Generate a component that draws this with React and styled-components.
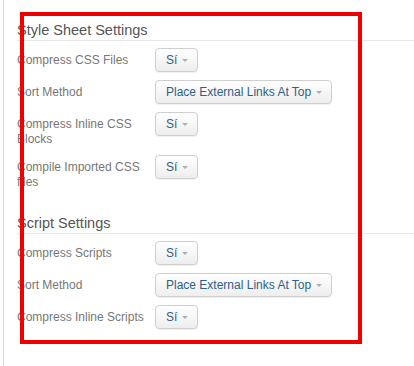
import styled, { createGlobalStyle } from "styled-components";

const GlobalStyle = createGlobalStyle`
  html, body {
    margin: 0;
    padding: 0;
    background: #fff;
  }
  body {
    font-family: "Liberation Sans", Arial, Helvetica, sans-serif;
  }
`;

const sections = [
  {
    title: "Style Sheet Settings",
    rows: [
      { label: "Compress CSS Files", value: "Sí" },
      { label: "Sort Method", value: "Place External Links At Top" },
      { label: "Compress Inline CSS Blocks", value: "Sí" },
      { label: "Compile Imported CSS files", value: "Sí" },
    ],
  },
  {
    title: "Script Settings",
    rows: [
      { label: "Compress Scripts", value: "Sí" },
      { label: "Sort Method", value: "Place External Links At Top" },
      { label: "Compress Inline Scripts", value: "Sí" },
    ],
  },
];

function App() {
  return (
    <>
      <GlobalStyle />
      <Page>
        {sections.map((section) => (
          <Fieldset key={section.title}>
            <Legend>{section.title}</Legend>
            {section.rows.map((row, i) => (
              <Row key={i}>
                <Label>{row.label}</Label>
                <Select>
                  <span>{row.value}</span>
                  <Caret />
                </Select>
              </Row>
            ))}
          </Fieldset>
        ))}
        <Highlight />
      </Page>
    </>
  );
}

const Page = styled.div`
  position: relative;
  box-sizing: border-box;
  min-height: 366px;
  margin-left: 3px;
  border-left: 1px solid #d8d8d8;
  padding: 20px 0 0 13px;
  overflow: hidden;
`;

const Fieldset = styled.section`
  display: flow-root;
  margin-bottom: 15px;
`;

const Legend = styled.h3`
  margin: 0 0 7px;
  font-size: 14.5px;
  font-weight: normal;
  line-height: 20px;
  color: #555;
  border-bottom: 1px solid #e8e8e8;
`;

const Row = styled.div`
  display: flex;
  align-items: flex-start;
  margin-bottom: 8px;
`;

const Label = styled.div`
  width: 130px;
  flex-shrink: 0;
  margin-right: 8px;
  padding-top: 5px;
  font-size: 12px;
  line-height: 15px;
  color: #777;
`;

const Select = styled.div`
  display: inline-flex;
  align-items: center;
  box-sizing: border-box;
  height: 24px;
  padding: 0 9px 0 10px;
  border: 1px solid #cfcfcf;
  border-radius: 4px;
  background: linear-gradient(#ffffff, #eeeeee);
  box-shadow: 0 1px 1px rgba(0, 0, 0, 0.06);
  font-size: 12px;
  color: #2f5f8a;
  white-space: nowrap;
`;

const Caret = styled.i`
  display: inline-block;
  margin-left: 5px;
  width: 0;
  height: 0;
  border-left: 3px solid transparent;
  border-right: 3px solid transparent;
  border-top: 3px solid #b0b0b0;
`;

const Highlight = styled.div`
  position: absolute;
  left: 16px;
  top: 12px;
  width: 342px;
  height: 332px;
  box-sizing: border-box;
  border: 4px solid #ec0000;
  pointer-events: none;
`;

export default App;
